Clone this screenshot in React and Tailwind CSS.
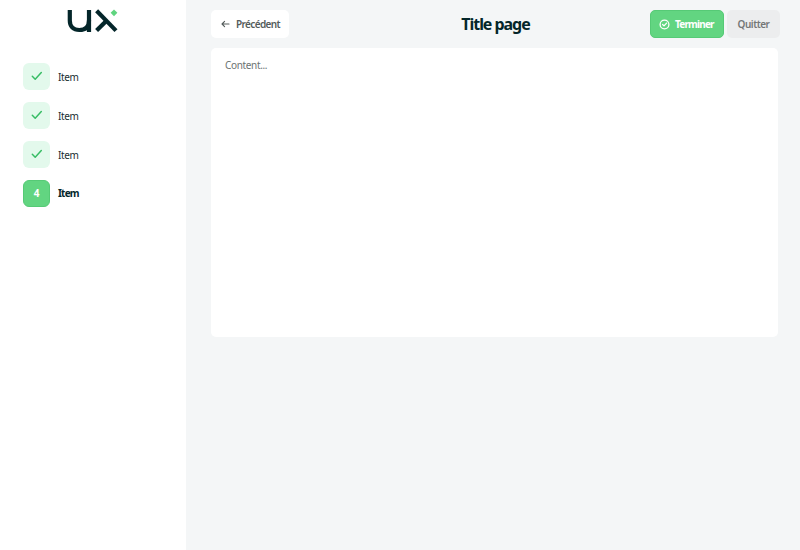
const items = [
  { label: "Item", done: true },
  { label: "Item", done: true },
  { label: "Item", done: true },
  { label: "Item", done: false },
];

function Logo() {
  return (
    <svg width="52" height="26" viewBox="0 0 52 26" fill="none" aria-label="ux">
      <g stroke="#04262a" strokeWidth="4.200">
        <path d="M2.800 2V12.500C2.800 18.800 6.400 22 12.300 22C18.400 22 22 18.800 22 12.500V2" />
        <path d="M22 12V24" />
        <path d="M29.600 2.800L49 22.600" />
        <path d="M29.600 22.600L39 13.200" />
      </g>
      <path d="M47 1.400L50.400 4.800L47 8.200L43.600 4.800Z" fill="#5fd47f" />
    </svg>
  );
}

function Check() {
  return (
    <svg className="-mt-px" width="12" height="10" viewBox="0 0 12 10" fill="none" stroke="#38bd65" strokeWidth="1.5" strokeLinecap="round" strokeLinejoin="round">
      <path d="M1.300 5.300L4.200 8.200L10.300 1.600" />
    </svg>
  );
}

export default function App() {
  return (
    <div className="flex h-[550px] w-[800px] overflow-hidden bg-[#f4f6f7] font-['Noto_Sans',sans-serif] text-[#172d31]">
      <aside className="w-[186px] shrink-0 bg-white">
        <div className="pt-2 pl-[67px]">
          <Logo />
        </div>
        <ul className="mt-[29px] flex flex-col gap-[12px] pl-[23px]">
          {items.map((item, i) => (
            <li key={i} className="flex h-[27px] items-center gap-2">
              <span
                className={
                  item.done
                    ? "flex size-[27px] items-center justify-center rounded-[6px] bg-[#e3f9ec]"
                    : "flex size-[27px] items-center justify-center rounded-[6px] border border-[#56ca76] bg-[#62d581] text-[10px] font-bold text-white"
                }
              >
                {item.done ? <Check /> : i + 1}
              </span>
              <span
                className={
                  item.done
                    ? "text-[10px] leading-none tracking-[-0.35px]"
                    : "-mt-px text-[10px] leading-none font-bold tracking-[-0.8px] text-[#04262a]"
                }
              >
                {item.label}
              </span>
            </li>
          ))}
        </ul>
      </aside>
      <main className="flex-1 pt-[10px] pr-[20px] pl-[25px]">
        <header className="grid h-[28px] grid-cols-[1fr_auto_1fr] items-stretch">
          <button className="flex w-[78px] items-center gap-[6px] rounded-[5px] bg-white pl-[10px] text-[10px] font-semibold text-[#545c5b]">
            <svg className="shrink-0" width="9" height="8" viewBox="0 0 9 8" fill="none" stroke="currentColor" strokeWidth="1.1" strokeLinecap="round" strokeLinejoin="round">
              <path d="M8 4H1M3.600 1.400L1 4L3.600 6.600" />
            </svg>
            <span className="tracking-[-0.62px]">Précédent</span>
          </button>
          <h1 className="self-center text-[16px] leading-none font-bold tracking-[-1.05px] whitespace-nowrap text-[#04262a]">
            Title page
          </h1>
          <div className="flex justify-end gap-[3px]">
            <button className="flex w-[74px] items-center gap-[5px] rounded-[5px] border border-[#56ca76] bg-[#62d581] pl-[8px] text-[10px] font-bold text-white">
              <svg className="shrink-0" width="11" height="11" viewBox="0 0 11 11" fill="none" stroke="currentColor" strokeWidth="1.300" strokeLinecap="round" strokeLinejoin="round">
                <circle cx="5.500" cy="5.500" r="4.400" />
                <path d="M3.600 5.500L5 6.900L7.600 4.100" />
              </svg>
              <span className="tracking-[-0.8px]">Terminer</span>
            </button>
            <button className="w-[53px] rounded-[5px] bg-[#ecedee] text-[10px] font-semibold tracking-[-0.5px] text-[#747777]">
              Quitter
            </button>
          </div>
        </header>
        <section className="mt-[10px] h-[289px] w-[567px] rounded-[5px] bg-white px-[14px] pt-[11px] text-[10px] leading-[13px] tracking-[-0.35px] text-[#6c7372]">
          Content...
        </section>
      </main>
    </div>
  );
}
